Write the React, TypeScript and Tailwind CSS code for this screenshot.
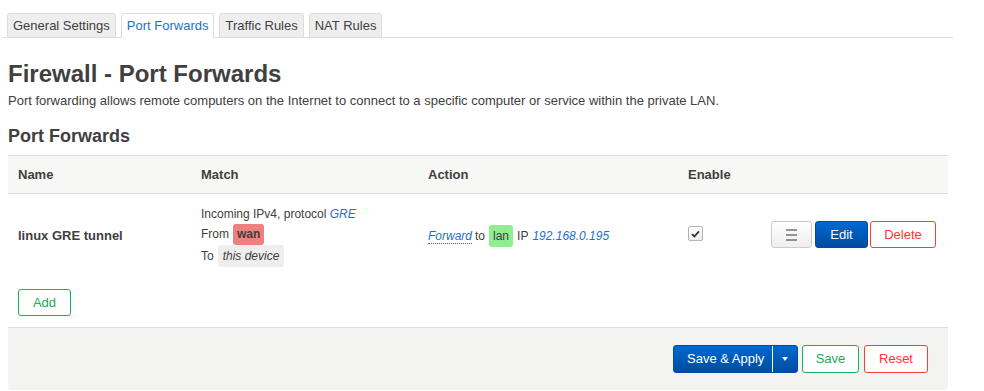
import React from "react"

const tabs = [
  { label: "General Settings", active: false },
  { label: "Port Forwards", active: true },
  { label: "Traffic Rules", active: false },
  { label: "NAT Rules", active: false },
]

function Checkbox() {
  return (
    <div className="w-[15px] h-[15px] rounded-[2px] border border-[#b5b5b5] bg-gradient-to-b from-white to-[#ececec] flex items-center justify-center">
      <svg width="9" height="8" viewBox="0 0 9 8">
        <path d="M1 4.2 L3.4 6.4 L8 1.4" fill="none" stroke="#333" strokeWidth="1.8" />
      </svg>
    </div>
  )
}

function MenuIcon() {
  return (
    <svg width="11" height="12" viewBox="0 0 11 12">
      <rect x="0" y="0.5" width="11" height="1" fill="#333" />
      <rect x="0" y="5.5" width="11" height="1" fill="#333" />
      <rect x="0" y="10.5" width="11" height="1" fill="#333" />
    </svg>
  )
}

export default function App() {
  return (
    <div className="w-[984px] h-[391px] bg-white text-[#404040] font-['Liberation_Sans',Arial,sans-serif] overflow-hidden">
      {/* tab bar */}
      <div className="pt-[13px] pl-[3px]">
        <div className="w-[950px] h-[25px] border-b border-[#dddddd] flex items-end gap-[5px] pl-[4px]">
          {tabs.map((t) => (
            <div
              key={t.label}
              className={`h-[25px] -mb-px px-[5px] rounded-t-[3px] border text-[13px] leading-[24px] ${
                t.active
                  ? "bg-white border-[#dddddd] border-b-white text-[#1f6fcf]"
                  : "bg-[#eeeeee] border-[#dddddd] text-[#404040]"
              }`}
            >
              {t.label}
            </div>
          ))}
        </div>
      </div>

      <div className="pl-[8px]">
        <h2 className="mt-[22px] text-[24px] leading-[28px] font-bold">Firewall - Port Forwards</h2>
        <p className="mt-[4px] text-[13px] leading-[18px]">
          Port forwarding allows remote computers on the Internet to connect to a specific computer or service within the private LAN.
        </p>
        <h3 className="mt-[15px] text-[18px] leading-[22px] font-bold">Port Forwards</h3>

        <div className="mt-[8px] w-[940px]">
          {/* header */}
          <div className="grid grid-cols-[183px_227px_260px_1fr] h-[39px] items-center bg-[#f7f7f5] border-y border-[#dddddd] text-[13px] font-bold">
            <div className="pl-[10px]">Name</div>
            <div className="pl-[10px]">Match</div>
            <div className="pl-[10px]">Action</div>
            <div className="pl-[10px]">Enable</div>
          </div>

          {/* row */}
          <div className="grid grid-cols-[183px_227px_260px_83px_1fr] h-[84px] items-center">
            <div className="pl-[10px] text-[13px] font-bold">linux GRE tunnel</div>
            <div className="pl-[10px] text-[12px] flex flex-col">
              <div className="h-[18px] flex items-center">
                Incoming IPv4, protocol&nbsp;<span className="italic text-[#1f6fcf]">GRE</span>
              </div>
              <div className="h-[22px] flex items-center">
                From
                <span className="ml-[4px] h-[21px] px-[4px] rounded-[3px] bg-[#f08080] font-bold flex items-center">wan</span>
              </div>
              <div className="h-[22px] flex items-center">
                To
                <span className="ml-[4px] h-[22px] px-[5px] rounded-[3px] bg-[#eeeeee] italic flex items-center">this device</span>
              </div>
            </div>
            <div className="pl-[10px] text-[12px] flex items-center">
              <span className="italic text-[#1f6fcf] border-b border-dotted border-[#1f6fcf] leading-[14px]">Forward</span>
              <span className="ml-[3px]">to</span>
              <span className="ml-[4px] h-[22px] px-[4px] rounded-[3px] bg-[#90ee90] flex items-center">lan</span>
              <span className="ml-[4px]">IP</span>
              <span className="ml-[4px] italic text-[#1f6fcf]">192.168.0.195</span>
            </div>
            <div className="pl-[10px] -mt-[5px]">
              <Checkbox />
            </div>
            <div className="flex justify-end pr-[12px] -mt-[3px]">
              <button className="w-[41px] h-[27px] rounded-[3px] border border-[#cccccc] bg-gradient-to-b from-white to-[#eeeeee] flex items-center justify-center">
                <MenuIcon />
              </button>
              <button className="ml-[3px] w-[53px] h-[27px] rounded-[3px] border border-[#004a9f] bg-gradient-to-b from-[#0069d2] to-[#004c9f] text-white text-[13px]">
                Edit
              </button>
              <button className="ml-[2px] w-[66px] h-[27px] rounded-[3px] border border-[#ff3a3a] bg-white text-[#ff3333] text-[13px]">
                Delete
              </button>
            </div>
          </div>

          {/* add */}
          <div className="pt-[11px] pb-[11px] pl-[10px]">
            <button className="w-[53px] h-[27px] rounded-[3px] border border-[#19b25c] bg-white text-[#21a957] text-[13px]">
              Add
            </button>
          </div>

          {/* footer */}
          <div className="h-[63px] border-t border-[#dddddd] bg-[#f3f3f1] rounded-b-[3px] flex justify-end items-start pt-[17px] pr-[20px]">
            <div className="h-[28px] w-[125px] rounded-[3px] border border-[#004a9f] bg-gradient-to-b from-[#0069d2] to-[#004c9f] flex text-white text-[13px]">
              <div className="w-[99px] pl-[13px] flex items-center border-r border-white">Save &amp; Apply</div>
              <div className="flex-1 flex items-center justify-center">
                <svg width="6" height="4" viewBox="0 0 6 4">
                  <path d="M0 0 L6 0 L3 4 Z" fill="#fff" />
                </svg>
              </div>
            </div>
            <button className="ml-[4px] w-[57px] h-[28px] rounded-[3px] border border-[#19b25c] bg-white text-[#21a957] text-[13px]">
              Save
            </button>
            <button className="ml-[5px] w-[64px] h-[28px] rounded-[3px] border border-[#ff3a3a] bg-white text-[#ff3333] text-[13px]">
              Reset
            </button>
          </div>
        </div>
      </div>
    </div>
  )
}
